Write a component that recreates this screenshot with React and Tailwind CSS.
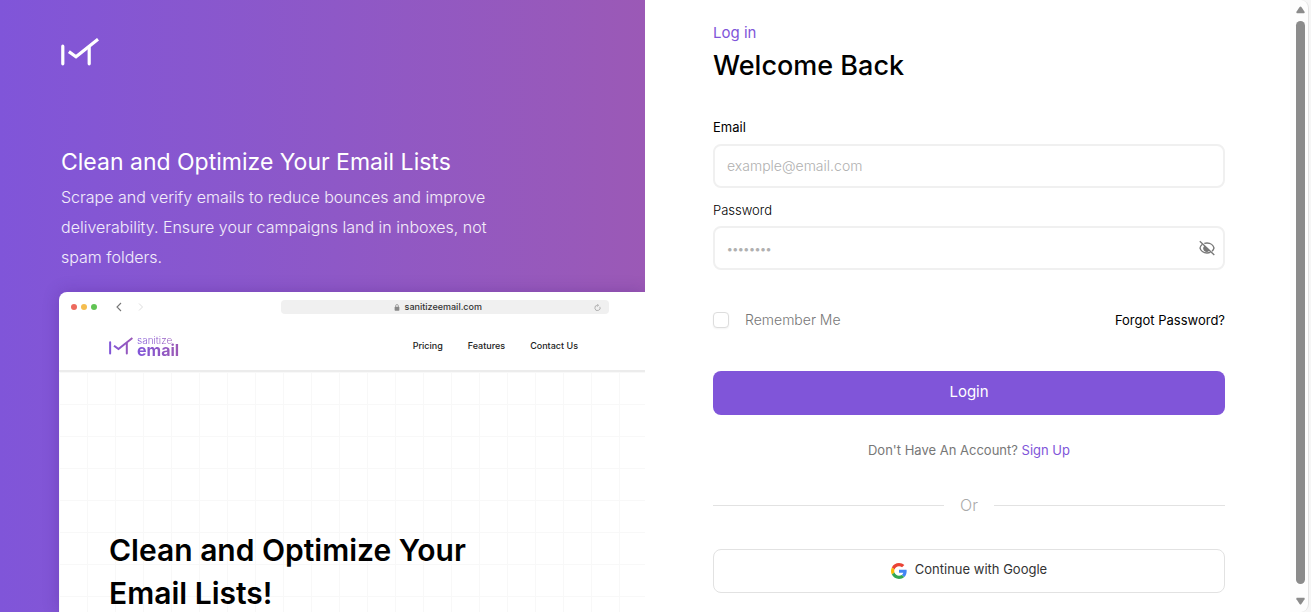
import React from "react";

const gridStyle =
  "bg-[linear-gradient(to_right,#f8f8f8_1px,transparent_1px),linear-gradient(to_bottom,#f8f8f8_1px,transparent_1px)] bg-[length:28px_32px] bg-[position:28px_0px]";

function LogoMark({ className, stroke }) {
  return (
    <svg viewBox="0 0 38 28" className={className} fill="none" aria-hidden="true">
      <defs>
        <linearGradient id="markFill" x1="0" y1="0" x2="38" y2="0" gradientUnits="userSpaceOnUse">
          <stop stopColor="#8055d9" />
          <stop offset="1" stopColor="#9b59b6" />
        </linearGradient>
      </defs>
      <path d="M1.8 8.2V25.800M28.200 9.500V25.800" stroke={stroke} strokeWidth="3.200" strokeLinecap="round" />
      <path d="M9.200 14.600L15 18.800L35.800 2.200" stroke={stroke} strokeWidth="3.200" strokeLinecap="square" />
    </svg>
  );
}

function GoogleIcon() {
  return (
    <svg viewBox="0 0 48 48" className="mt-[2px] size-4" aria-hidden="true">
      <path fill="#EA4335" d="M24 9.5c3.54 0 6.71 1.22 9.21 3.6l6.85-6.85C35.9 2.38 30.47 0 24 0 14.62 0 6.51 5.38 2.56 13.22l7.98 6.19C12.43 13.72 17.74 9.5 24 9.5z" />
      <path fill="#4285F4" d="M46.98 24.55c0-1.57-.15-3.09-.38-4.55H24v9.02h12.94c-.58 2.96-2.26 5.48-4.78 7.18l7.73 6c4.51-4.18 7.09-10.36 7.09-17.65z" />
      <path fill="#FBBC05" d="M10.53 28.59c-.48-1.45-.76-2.99-.76-4.59s.27-3.14.76-4.59l-7.98-6.19C.92 16.46 0 20.12 0 24c0 3.88.92 7.54 2.56 10.78l7.97-6.19z" />
      <path fill="#34A853" d="M24 48c6.48 0 11.93-2.13 15.89-5.81l-7.73-6c-2.15 1.45-4.92 2.3-8.16 2.3-6.26 0-11.57-4.22-13.47-9.91l-7.98 6.19C6.51 42.62 14.62 48 24 48z" />
    </svg>
  );
}

function EyeOffIcon() {
  return (
    <svg viewBox="0 0 16 16" className="size-4" fill="none" stroke="#777" strokeWidth="1.3" aria-hidden="true">
      <path d="M3.4 4.3C2.1 5.300 1.200 6.700 1 8c.6 2.600 3.400 5 7 5 1.300 0 2.500-.3 3.500-.8" />
      <path d="M5.300 3.300C6.100 3.100 7 3 8 3c3.600 0 6.400 2.400 7 5-.3 1.200-1 2.300-2 3.200" />
      <path d="M5.600 6.400A2.800 2.800 0 0 0 9.800 10.300L8 8.500Z" fill="#777" />
      <path d="M.8 1.200L15.300 15" />
    </svg>
  );
}

function BrowserPreview() {
  return (
    <div className="ml-[59px] mt-5 flex grow flex-col overflow-hidden rounded-tl-lg bg-white shadow-[0_0_16px_rgba(60,20,120,0.25)]">
      <div className="flex h-[30px] shrink-0 items-center pl-3 pr-9">
        <div className="flex gap-1">
          <span className="size-[6px] rounded-full bg-[#ed6a5e]" />
          <span className="size-[6px] rounded-full bg-[#f5bd4f]" />
          <span className="size-[6px] rounded-full bg-[#61c454]" />
        </div>
        <svg viewBox="0 0 30 10" className="ml-[18px] h-[10px] w-[30px]" fill="none" aria-hidden="true">
          <path d="M6 1L2 5L6 9" stroke="#777" strokeWidth="1.1" />
          <path d="M24 1.500L27.500 5L24 8.500" stroke="#ddd" strokeWidth="1" />
        </svg>
        <div className="ml-auto flex h-[14px] w-[328px] items-center justify-end rounded bg-[#f0f0f0] pr-2 text-[9px] font-medium text-[#333]">
          <svg viewBox="0 0 6 8" className="mr-[5px] h-[7px] w-[6px]" aria-hidden="true">
            <rect x="0.300" y="3.200" width="5.400" height="4.500" rx="0.800" fill="#888" />
            <path d="M1.400 3.500V2.200a1.600 1.600 0 0 1 3.200 0V3.500" fill="none" stroke="#888" strokeWidth="0.800" />
          </svg>
          <span>sanitizeemail.com</span>
          <svg viewBox="0 0 8 8" className="ml-28 size-[7px]" fill="none" stroke="#999" strokeWidth="0.800" aria-hidden="true">
            <path d="M6.700 3.200A3 3 0 1 1 4 1.500h.8M3.700.2L5.200 1.500L3.700 2.900" />
          </svg>
        </div>
      </div>
      <div className="flex h-[50px] shrink-0 items-center border-b-2 border-[#ececec] pl-[50px] pr-[67px]">
        <LogoMark className="h-[18px] w-6" stroke="url(#markFill)" />
        <div className="ml-1 flex flex-col bg-gradient-to-r from-[#8055d9] to-[#9b59b6] bg-clip-text text-transparent">
          <span className="text-[10px] font-light leading-[9px]">sanitize</span>
          <span className="text-base font-bold leading-[11px]">email</span>
        </div>
        <nav className="ml-auto flex gap-[25px] text-[9px] font-medium text-[#222]">
          <a href="#pricing">Pricing</a>
          <a href="#features">Features</a>
          <a href="#contact">Contact Us</a>
        </nav>
      </div>
      <div className={"grow pl-[50px] pt-[157px] " + gridStyle}>
        <p className="text-[30px] font-semibold leading-[43px] text-black">
          Clean and Optimize Your
          <br />
          Email Lists!
        </p>
      </div>
    </div>
  );
}

function ScrollRail() {
  return (
    <div className="flex w-[19px] shrink-0 flex-col items-center rounded-r-lg border-r border-[#e2e2e2] bg-[#fdfdfd] py-1 pl-[3px]" aria-hidden="true">
      <svg viewBox="0 0 10 8" className="mt-[2px] h-2 w-[9px]" fill="#8b8b8b">
        <path d="M4 .8Q5-.4 6 .8L9.500 6Q10 7.500 9 7.500H1Q0 7.500 .5 6Z" />
      </svg>
      <div className="mt-[7px] w-[9px] grow rounded-full bg-[#8b8b8b]" />
      <svg viewBox="0 0 10 8" className="mb-[3px] mt-[13px] h-2 w-[9px]" fill="#8b8b8b">
        <path d="M4 7.200Q5 8.400 6 7.200L9.500 2Q10 .5 9 .5H1Q0 .5 .5 2Z" />
      </svg>
    </div>
  );
}

export default function App() {
  const field =
    "h-11 w-full rounded-lg border-2 border-[#f0f0f0] bg-white pb-[2px] pl-3 text-sm font-light text-black outline-none placeholder:text-[#b0b0b0] focus:border-[#8055d9]";
  return (
    <div className="flex h-screen overflow-hidden bg-white font-['Inter',sans-serif]">
      <div className="grid min-w-0 grow grid-cols-2">
        <section className="flex min-w-0 flex-col overflow-hidden bg-gradient-to-r from-[#8055d9] to-[#9b59b6] text-white">
          <div className="px-[61px] pt-[38px]">
            <LogoMark className="h-7 w-[38px]" stroke="#fff" />
            <h2 className="mt-20 text-[23px] leading-8">Clean and Optimize Your Email Lists</h2>
            <p className="mt-1 max-w-[450px] text-base font-light leading-[30px] text-white/90">
              Scrape and verify emails to reduce bounces and improve deliverability. Ensure your campaigns land in inboxes, not spam folders.
            </p>
          </div>
          <BrowserPreview />
        </section>

        <main className="min-w-0 pl-[68px] pr-[65px] pt-[21px]">
          <p className="text-[15px] leading-6 text-[#8055d9]">Log in</p>
          <h1 className="text-[27px] font-medium leading-[42px] text-black">Welcome Back</h1>
          <form className="mt-[30px]" onSubmit={(e) => e.preventDefault()}>
            <label htmlFor="email" className="block text-[13px] leading-5 text-black">Email</label>
            <input id="email" type="email" placeholder="example@email.com" className={field + " mt-[7px]"} />
            <label htmlFor="password" className="mt-3 block text-[13px] font-light leading-5 text-black">Password</label>
            <div className="relative mt-[6px]">
              <input id="password" type="password" placeholder="••••••••" className={field + " placeholder:text-[11px] placeholder:font-semibold"} />
              <button type="button" aria-label="Show password" className="absolute right-[10px] top-[14px]">
                <EyeOffIcon />
              </button>
            </div>
            <div className="mt-10 flex items-center justify-between leading-5">
              <label className="flex items-center gap-4 text-sm font-light text-[#777]">
                <input type="checkbox" className="size-4 appearance-none rounded border border-[#ddd] bg-white shadow-xs checked:bg-[#8055d9]" />
                Remember Me
              </label>
              <a href="#forgot" className="text-[13px] text-black">Forgot Password?</a>
            </div>
            <button type="submit" className="mt-[41px] h-11 w-full rounded-lg bg-[#8055d9] pb-[2px] text-[15px] text-white">Login</button>
          </form>
          <p className="mt-[25px] text-center text-[13px] leading-5 text-[#777]">
            Don't Have An Account? <a href="#signup" className="text-[#8055d9]">Sign Up</a>
          </p>
          <div className="mt-[33px] flex items-center gap-4 text-base font-light leading-6 text-[#aaa]">
            <span className="h-px grow bg-[#e2e2e2]" />
            Or
            <span className="h-px grow bg-[#e2e2e2]" />
          </div>
          <button type="button" className="mt-8 flex h-11 w-full items-center justify-center gap-2 rounded-lg border border-[#e2e2e2] bg-white pb-[2px] text-[13px] text-[#333]">
            <GoogleIcon />
            Continue with Google
          </button>
        </main>
      </div>

      <div className="flex shrink-0 bg-[#f6f6f6] pr-[2px]">
        <ScrollRail />
      </div>
    </div>
  );
}
